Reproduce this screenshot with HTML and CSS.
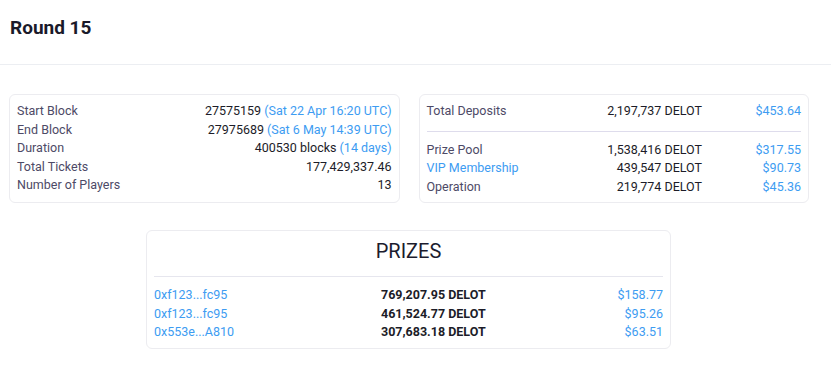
FILE: index.html
```html
<html>
<head>
    <title>Round 15</title>
    <link rel="stylesheet" href="styles.css">
</head>
<body>

<div class="header">
    <h2>Round 15</h2>
</div>

<div class="main">

    <div class="cards">

        <div class="card">
            <div class="row">
                <span class="label">Start Block</span>
                <span class="value">27575159 <span class="link">(Sat 22 Apr 16:20 UTC)</span></span>
            </div>
            <div class="row">
                <span class="label">End Block</span>
                <span class="value">27975689 <span class="link">(Sat 6 May 14:39 UTC)</span></span>
            </div>
            <div class="row">
                <span class="label">Duration</span>
                <span class="value">400530 blocks <span class="link">(14 days)</span></span>
            </div>
            <div class="row">
                <span class="label">Total Tickets</span>
                <span class="value">177,429,337.46</span>
            </div>
            <div class="row">
                <span class="label">Number of Players</span>
                <span class="value">13</span>
            </div>
        </div>

        <div class="card">
            <div class="money-row">
                <span class="label">Total Deposits</span>
                <span class="value">2,197,737 DELOT</span>
                <span class="usd">$453.64</span>
            </div>
            <hr class="divider">
            <div class="money-row">
                <span class="label">Prize Pool</span>
                <span class="value">1,538,416 DELOT</span>
                <span class="usd">$317.55</span>
            </div>
            <div class="money-row">
                <span class="label link">VIP Membership</span>
                <span class="value">439,547 DELOT</span>
                <span class="usd">$90.73</span>
            </div>
            <div class="money-row">
                <span class="label">Operation</span>
                <span class="value">219,774 DELOT</span>
                <span class="usd">$45.36</span>
            </div>
        </div>

    </div>

    <div class="card prizes">
        <h3>PRIZES</h3>
        <hr class="divider prize-divider">
        <div class="prize-row">
            <span class="link">0xf123...fc95</span>
            <span class="amount">769,207.95 DELOT</span>
            <span class="usd">$158.77</span>
        </div>
        <div class="prize-row">
            <span class="link">0xf123...fc95</span>
            <span class="amount">461,524.77 DELOT</span>
            <span class="usd">$95.26</span>
        </div>
        <div class="prize-row">
            <span class="link">0x553e...A810</span>
            <span class="amount">307,683.18 DELOT</span>
            <span class="usd">$63.51</span>
        </div>
    </div>

</div>

</body>
</html>
```

FILE: styles.css
```css
body
{
    font-family: Roboto, 'Liberation Sans', sans-serif;
    background-color: #fff;
    color: #1c1c28;
    margin: 0;
}

.header
{
    height: 65px;
    box-sizing: border-box;
    padding: 17px 10px 0;
    border-bottom: 1px solid #eceef2;
}

.header h2
{
    margin: 0;
    font-size: 19px;
    line-height: 22px;
    font-weight: 700;
    color: #1a1a2a;
}

.main
{
    width: 800px;
    padding: 29px 0 0 9px;
}

.cards
{
    display: flex;
    gap: 19px;
}

.card
{
    flex: 1;
    border: 1px solid #ececf0;
    border-radius: 6px;
    padding: 7px 7px 6px;
    font-size: 12.5px;
    line-height: 18.5px;
}

.row
{
    display: flex;
    justify-content: space-between;
}

.label
{
    color: #4d4a66;
}

.value
{
    color: #1c1c28;
}

.link,
.usd
{
    color: #3d9cf2;
}

.money-row
{
    display: grid;
    grid-template-columns: 1fr auto 99px;
}

.money-row .usd
{
    text-align: right;
}

.divider
{
    border: none;
    border-top: 1px solid #dedcec;
    margin: 10px 0 9px;
}

.prizes
{
    width: 509px;
    margin: 27px 0 0 137px;
    flex: none;
    padding-top: 7px;
}

.prizes h3
{
    margin: 0;
    text-align: center;
    font-size: 20px;
    line-height: 26px;
    font-weight: 400;
    color: #1c1c2e;
}

.prize-divider
{
    border-top-color: #e6e6ee;
    margin: 12px 0 9px;
}

.prize-row
{
    display: grid;
    grid-template-columns: 227px 1fr auto;
}

.amount
{
    font-weight: 700;
    color: #1c1c28;
}

.prize-row .usd
{
    text-align: right;
}
```
